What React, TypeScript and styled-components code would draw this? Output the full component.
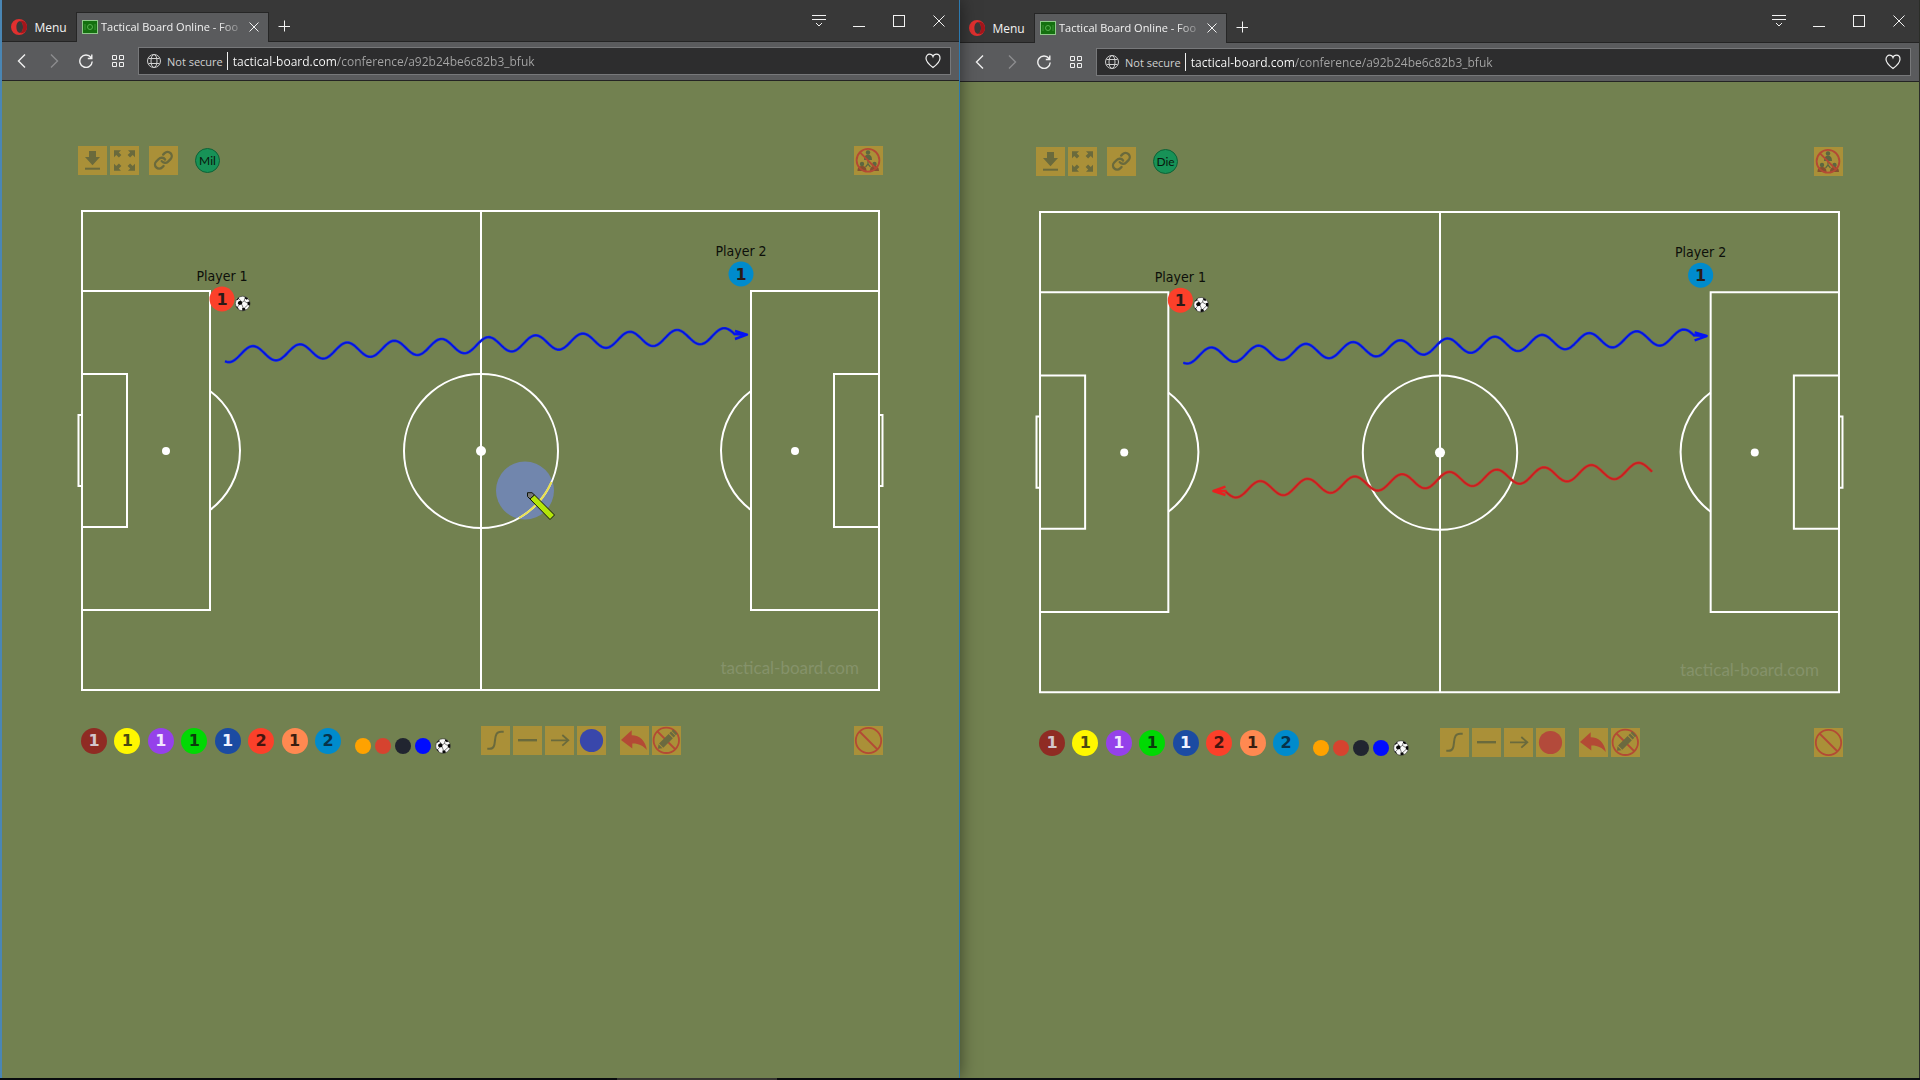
import React from "react";
import styled, { createGlobalStyle } from "styled-components";

const UI_FONT = `"Open Sans", "Noto Sans", sans-serif`;
const BOARD_FONT = `"DejaVu Sans Condensed", "DejaVu Sans", sans-serif`;
const NUMBER_FONT = `"DejaVu Sans", sans-serif`;
const ICON = "#6a6a3c";
const RED = "#b34a35";

const GlobalStyle = createGlobalStyle`
  *, *::before, *::after { box-sizing: border-box; }
  body { margin: 0; background: #0b0f12; font-family: ${UI_FONT}; }
  button, input { font: inherit; color: inherit; }
`;

const Desktop = styled.div`
  display: flex;
  flex-direction: column;
  min-height: 100vh;
`;

const Windows = styled.div`
  display: grid;
  grid-template-columns: 1fr 1fr;
  flex: 1;
`;

const Taskbar = styled.div`
  display: grid;
  grid-template-columns: 617fr 160fr 1143fr;
  height: 2px;
`;

const TaskbarThumb = styled.span`
  grid-column: 2;
  background: #45453f;
`;

const Window = styled.section<{ $active: boolean }>`
  position: relative;
  z-index: ${(p) => (p.$active ? 1 : 0)};
  display: flex;
  flex-direction: column;
  min-width: 0;
  background: #728150;
  border-left: ${(p) => (p.$active ? "2px solid #4a86b4" : "none")};
  border-right: 1px solid ${(p) => (p.$active ? "#2c7ab0" : "#2b2d28")};
  box-shadow: ${(p) => (p.$active ? "0 0 16px rgba(0, 0, 0, 0.5)" : "none")};
`;

const TabBar = styled.header<{ $active: boolean }>`
  display: flex;
  align-items: flex-end;
  height: ${(p) => (p.$active ? 42 : 43)}px;
  background: #383838;
  border-bottom: 1px solid #242424;
  color: #f2f2f2;
  font-size: 12px;
`;

const BareButton = styled.button`
  display: flex;
  align-items: center;
  justify-content: center;
  padding: 0;
  border: 0;
  background: none;
`;

const MenuButton = styled(BareButton)`
  gap: 7px;
  width: 74px;
  height: 28px;
`;

const Tab = styled.div`
  display: flex;
  align-items: center;
  gap: 3px;
  width: 193px;
  height: 30px;
  margin-bottom: -1px;
  padding: 0 4px 2px 5px;
  background: #5a5b5d;
  border: 1px solid #262626;
  border-bottom: 0;
`;

const TabTitle = styled.span`
  flex: 1;
  white-space: nowrap;
  font-size: 11px;
  mask-image: linear-gradient(90deg, #000 84%, rgba(0, 0, 0, 0.2) 100%);
`;

const CloseTab = styled(BareButton)`
  width: 20px;
  height: 20px;
`;

const NewTab = styled(BareButton)`
  width: 30px;
  height: 30px;
`;

const WindowControls = styled.div`
  display: flex;
  align-self: flex-start;
  margin-left: auto;
`;

const WindowControl = styled(BareButton)`
  width: 40px;
  height: 42px;
`;

const Toolbar = styled.nav`
  display: flex;
  align-items: center;
  height: 39px;
  padding: 0 8px 0 4px;
  background: #5a5b5d;
  border-bottom: 1px solid #242424;
  color: #f0f0f0;
`;

const NavButton = styled(BareButton)`
  width: 32px;
  height: 28px;
`;

const AddressBar = styled.form`
  display: flex;
  flex: 1;
  align-items: center;
  height: 28px;
  margin-left: 4px;
  padding: 0 9px 0 8px;
  background: #2d2d2e;
  border: 1px solid #77787a;
`;

const Security = styled(BareButton)`
  gap: 6px;
  height: 18px;
  padding-right: 4px;
  border-right: 1px solid #f0f0f0;
  color: #d0d0d0;
  font-size: 11px;
`;

const UrlInput = styled.input`
  flex: 1;
  min-width: 0;
  height: 24px;
  margin-left: 5px;
  padding: 0;
  border: 0;
  outline: 0;
  font-size: 12px;
  color: transparent;
  background: linear-gradient(90deg, #ffffff 104px, #a6a6a6 104px);
  background-clip: text;
`;

const Page = styled.main`
  display: flex;
  flex: 1;
  flex-direction: column;
  gap: 32px;
  padding: 65px 76px 32px;
`;

const Row = styled.div`
  display: flex;
  align-items: center;
`;

const Group = styled.div<{ $after?: number }>`
  display: flex;
  gap: 3px;
  margin-right: ${(p) => p.$after ?? 0}px;
`;

const Tool = styled.button`
  width: 29px;
  height: 29px;
  padding: 0;
  border: 0;
  background: #aa9038;
`;

const EndTool = styled(Tool)`
  margin-left: auto;
`;

const ToolSvg = styled.svg`
  display: block;
  width: 29px;
  height: 29px;
`;

const Avatar = styled.div`
  display: flex;
  align-items: center;
  justify-content: center;
  width: 25px;
  height: 25px;
  border: 1px solid #0d6236;
  border-radius: 50%;
  background: #179257;
  color: #08160c;
  font: 12px Lato, sans-serif;
`;

const Pitch = styled.svg`
  display: block;
  width: 100%;
  overflow: visible;
  font-family: ${BOARD_FONT};
`;

const BottomRow = styled.div`
  display: grid;
  grid-template-columns: 1fr 1fr;
`;

const Palette = styled.div`
  display: flex;
  align-items: center;
  padding-left: 3px;
`;

const Tokens = styled.div`
  display: flex;
  justify-content: space-between;
  width: 260px;
  margin-right: 14px;
`;

const Token = styled.button<{ $bg: string; $fg: string }>`
  width: 26px;
  height: 26px;
  padding: 0;
  border: 0;
  border-radius: 50%;
  background: ${(p) => p.$bg};
  color: ${(p) => p.$fg};
  font: bold 16px/26px ${NUMBER_FONT};
`;

const Balls = styled.div`
  display: flex;
  align-self: flex-end;
  gap: 4px;
  padding-bottom: 1px;
`;

const Dot = styled.button<{ $bg: string }>`
  width: 16px;
  height: 16px;
  padding: 0;
  border: 0;
  border-radius: 50%;
  background: ${(p) => p.$bg};
`;

const BallSvg = styled.svg`
  display: block;
  width: 16px;
  height: 16px;
`;

const TOKENS = [
  { n: 1, bg: "#8f2b23", fg: "#d3c6cc", name: "Maroon" },
  { n: 1, bg: "#fff700", fg: "#4b4a12", name: "Yellow" },
  { n: 1, bg: "#9541ea", fg: "#f1e6ff", name: "Purple" },
  { n: 1, bg: "#00d903", fg: "#0b3c0d", name: "Green" },
  { n: 1, bg: "#1b4ba2", fg: "#f0f2ff", name: "Navy" },
  { n: 2, bg: "#fb402a", fg: "#45150f", name: "Red" },
  { n: 1, bg: "#ff8951", fg: "#3b1d10", name: "Coral" },
  { n: 2, bg: "#008bcc", fg: "#07324a", name: "Cyan" },
];

const DOTS = [
  { bg: "#ffa200", name: "Orange ball" },
  { bg: "#d6432f", name: "Red ball" },
  { bg: "#212530", name: "Black ball" },
  { bg: "#000cff", name: "Blue ball" },
];

type WaveProps = { from: number; to: number; peakX: number; midY: number; slope: number; period: number };

/** Builds a sampled sine wave that runs along a sloping line. */
function wavePath({ from, to, peakX, midY, slope, period }: WaveProps) {
  const points: string[] = [];
  for (let x = from; x <= to; x += 1.5) {
    const d = x - peakX;
    const y = midY + slope * d - 7.6 * Math.cos((2 * Math.PI * d) / period);
    points.push(`${x.toFixed(1)} ${y.toFixed(2)}`);
  }
  return `M${points.join("L")}`;
}

const BLUE_WAVE = wavePath({ from: 147, to: 658, peakX: 174.7, midY: 146.7, slope: -0.038, period: 47.13 });
const RED_WAVE = wavePath({ from: 188.5, to: 615, peakX: 223.4, midY: 280, slope: -0.0484, period: 47.17 });

function BallArt() {
  return (
    <>
      <circle r="7.3" fill="#fafafa" stroke="#2a2a2a" strokeWidth=".6" />
      <path
        fill="#080808"
        d="M-4.500-1.800-2.200-3-.3-1.500-.8 1-3.600 1.500-5 0ZM2-6.800A7.300 7.300 0 0 1 5.500-4.700L4-3.800 2-5ZM4.500-1.500 7-2A7.300 7.300 0 0 1 7 2L5 1.500ZM-6.500-3.200A7.300 7.300 0 0 1-3.500-6.300L-3.800-4.800-5.200-3.500ZM-6.800 2.500-5.200 3.500-4 5.500-4.500 5.800A7.300 7.300 0 0 1-6.800 2.500ZM-.5 4.500 2 4.200 3 6.600A7.300 7.300 0 0 1-.5 7.300Z"
      />
      <path
        stroke="#444"
        strokeWidth=".7"
        fill="none"
        d="M-.3-1.500 1.500-2.500 2-5M1.500-2.500 4.500-.5M-.8 1 .5 4.500M5 1.500 2 4.200M-3.600 1.500-5.200 3.500M-2.200-3-3.800-4.800"
      />
    </>
  );
}

function PlayerMark({ x, y, label, color }: { x: number; y: number; label: string; color: string }) {
  return (
    <g textAnchor="middle">
      <circle cx={x} cy={y} r="12.5" fill={color} />
      <text x={x} y={y + 6} fontSize="16" fontWeight="bold" fontFamily={NUMBER_FONT} fill="#2a1a18">
        1
      </text>
      <text x={x} y={y - 18} fontSize="14" fill="#0d0f0a">
        {label}
      </text>
    </g>
  );
}

function PitchHalf() {
  return (
    <g>
      <path d="M4 84H132V403H4M4 167H49V320H4M4 208H.5V279H4" />
      <path d="M132 184A74 74 0 0 1 132 303" />
      <circle cx="88" cy="244" r="4" fill="#fff" stroke="none" />
    </g>
  );
}

function Board({ active }: { active: boolean }) {
  return (
    <Pitch viewBox="0 0 805 487" role="img" aria-label="Football pitch">
      {active && <circle cx="447" cy="283.5" r="29" fill="#7186ad" />}
      <g fill="none" stroke="#fff" strokeWidth="2">
        <path d="M4 4H801V483H4ZM403 4V483" />
        <circle cx="403" cy="244" r="77" />
        <circle cx="403" cy="244" r="5" fill="#fff" stroke="none" />
        <PitchHalf />
        <g transform="matrix(-1 0 0 1 805 0)">
          <PitchHalf />
        </g>
      </g>
      <text x="781" y="467" fontSize="17" textAnchor="end" fill="#85926a" fontFamily="Lato, sans-serif">
        tactical-board.com
      </text>
      <PlayerMark x={144} y={92} label="Player 1" color="#fb402a" />
      <g transform="translate(164.7 96.5)">
        <BallArt />
      </g>
      <PlayerMark x={663} y={67} label="Player 2" color="#008bcc" />
      <g fill="none" strokeLinejoin="round">
        <path d={BLUE_WAVE} stroke="#0c20ff" strokeWidth="2.6" />
        <path d={BLUE_WAVE} stroke="#0818c8" strokeWidth="1.2" />
        <path d="M657 124 669 127.7 657 132M669 127.7 656 127" stroke="#0412f6" strokeWidth="2.4" />
      </g>
      {!active && (
        <g fill="none" strokeLinejoin="round">
          <path d={RED_WAVE} stroke="#dc2828" strokeWidth="2.6" />
          <path d={RED_WAVE} stroke="#bf2421" strokeWidth="1.4" />
          <path d="M189 278 177 282.3 189 286.3M177 282.3 190 282.3" stroke="#e8201f" strokeWidth="2.4" />
        </g>
      )}
      {active && (
        <>
          <path d="M473.5 275A77 77 0 0 1 441 311" fill="none" stroke="#e9e150" strokeWidth="2" />
          <g stroke="#10160a">
            <path d="M449.5 285.7H454L456.5 288 452 292 449.5 289.5Z" fill="#777" />
            <path d="M452 292 456.5 288 476.5 308 472 312.5Z" fill="#b4e60a" />
          </g>
        </>
      )}
    </Pitch>
  );
}

function Icon({ children }: { children: React.ReactNode }) {
  return (
    <ToolSvg viewBox="0 0 29 29" fill="none" stroke={ICON} strokeWidth="2" aria-hidden="true">
      {children}
    </ToolSvg>
  );
}

const EXPAND_ARROW = "M4 4.3H11L8.8 6.5 11.4 9.1 8.9 11.4 6.3 8.9 4 11.2Z";

function TopTools({ user }: { user: string }) {
  return (
    <Row>
      <Group $after={10}>
        <Tool type="button" aria-label="Download">
          <Icon>
            <path d="M11 5h7v6h4l-7.5 8.3L7 11h4z" fill={ICON} stroke="none" />
            <path d="M7 22.7h15" />
          </Icon>
        </Tool>
        <Tool type="button" aria-label="Full screen">
          <Icon>
            <g fill={ICON} stroke="none">
              <path d={EXPAND_ARROW} />
              <path d={EXPAND_ARROW} transform="matrix(-1 0 0 1 29 0)" />
              <path d={EXPAND_ARROW} transform="matrix(1 0 0 -1 0 29)" />
              <path d={EXPAND_ARROW} transform="matrix(-1 0 0 -1 29 29)" />
            </g>
          </Icon>
        </Tool>
      </Group>
      <Group $after={17}>
        <Tool type="button" aria-label="Share link">
          <Icon>
            <g transform="translate(4.3 4.2) scale(.84)" strokeWidth="2.8" strokeLinecap="round">
              <path d="M10 13a5 5 0 0 0 7.54.54l3-3a5 5 0 0 0-7.07-7.07l-1.72 1.71" />
              <path d="M14 11a5 5 0 0 0-7.54-.54l-3 3a5 5 0 0 0 7.07 7.07l1.71-1.71" />
            </g>
          </Icon>
        </Tool>
      </Group>
      <Avatar>{user}</Avatar>
      <EndTool type="button" aria-label="Leave conference">
        <Icon>
          <g fill="#5d6640" stroke="none">
            <circle cx="14" cy="6.5" r="2.2" />
            <path d="M10 14c0-4 1.8-5.3 4-5.3s4 1.3 4 5.3z" />
            <circle cx="8" cy="18" r="2.2" />
            <circle cx="20.5" cy="18" r="2.2" />
          </g>
          <path d="M3.5 25c0-4 2-5 4.5-5s4.5 1 4.5 5zM16 25c0-4 2-5 4.5-5s4.5 1 4.5 5z" fill="#84502f" stroke="none" />
          <path d="M14 15v3l-2.5 3M14 18l2.5 3" stroke="#5d6640" strokeWidth="1.2" />
          <circle cx="14" cy="14.3" r="11.4" stroke={RED} strokeWidth="1.8" />
          <path d="M6 6.3 22 22.5" stroke={RED} strokeWidth="1.8" />
        </Icon>
      </EndTool>
    </Row>
  );
}

function BottomTools({ color }: { color: string }) {
  return (
    <BottomRow>
      <Palette>
        <Tokens>
          {TOKENS.map((t) => (
            <Token key={t.name} type="button" $bg={t.bg} $fg={t.fg} aria-label={`${t.name} player ${t.n}`}>
              {t.n}
            </Token>
          ))}
        </Tokens>
        <Balls>
          {DOTS.map((d) => (
            <Dot key={d.name} type="button" $bg={d.bg} aria-label={d.name} />
          ))}
          <Dot type="button" $bg="transparent" aria-label="Football">
            <BallSvg viewBox="-8 -8 16 16" aria-hidden="true">
              <BallArt />
            </BallSvg>
          </Dot>
        </Balls>
      </Palette>
      <Row>
        <Group $after={14}>
          <Tool type="button" aria-label="Line shape">
            <Icon>
              <path d="M6.3 22.8H8.5C13 22.8 13.5 19.5 14 14.3S15.5 5.8 20 5.8H22.7" />
            </Icon>
          </Tool>
          <Tool type="button" aria-label="Line style">
            <Icon>
              <path d="M5 14.2H24" strokeWidth="2.4" />
            </Icon>
          </Tool>
          <Tool type="button" aria-label="Arrow end">
            <Icon>
              <path d="M6 14.3H23M17.3 9 23.3 14.3 17.3 19.6" strokeWidth="1.8" />
            </Icon>
          </Tool>
          <Tool type="button" aria-label="Line colour">
            <Icon>
              <circle cx="14.5" cy="14.5" r="11.6" fill={color} stroke="none" />
            </Icon>
          </Tool>
        </Group>
        <Group>
          <Tool type="button" aria-label="Undo">
            <Icon>
              <path
                d="M1 14 11.7 4.3V9.3C20 9.5 25.5 15 26.9 24 23 19.5 18.5 17.3 12.3 17.5V22.5Z"
                fill={RED}
                stroke="none"
              />
            </Icon>
          </Tool>
          <Tool type="button" aria-label="Erase drawings">
            <Icon>
              <circle cx="14.3" cy="14.3" r="12.7" stroke={RED} strokeWidth="1.8" />
              <path d="M5.5 5.5 23 23" stroke={RED} strokeWidth="1.8" />
              <g fill="#6b6a3f" stroke="none" transform="rotate(-45 14.5 14.3)">
                <path d="M2.500 14.300 6 11.500V17.100ZM7 11.300H20.500V17.300H7ZM21.500 11.300H24V17.300H21.500ZM24.800 11.300H27V17.300H24.800Z" />
              </g>
            </Icon>
          </Tool>
        </Group>
        <EndTool type="button" aria-label="Clear board">
          <Icon>
            <circle cx="14.5" cy="14.5" r="12.7" stroke={RED} strokeWidth="1.8" />
            <path d="M5.5 5.5 23.5 23.5" stroke={RED} strokeWidth="1.8" />
          </Icon>
        </EndTool>
      </Row>
    </BottomRow>
  );
}

function Glyph({ size, children, stroke = 1 }: { size: number; children: React.ReactNode; stroke?: number }) {
  return (
    <svg
      width={size}
      height={size}
      viewBox={`0 0 ${size} ${size}`}
      fill="none"
      stroke="currentColor"
      strokeWidth={stroke}
      aria-hidden="true"
    >
      {children}
    </svg>
  );
}

function BrowserWindow({ active, user, color }: { active: boolean; user: string; color: string }) {
  return (
    <Window $active={active}>
      <TabBar $active={active}>
        <MenuButton type="button">
          <Glyph size={16}>
            <path
              fillRule="evenodd"
              stroke="none"
              fill="#e0302f"
              d="M8 0a8 8 0 1 0 0 16A8 8 0 0 0 8 0Zm.8 2.2c2 0 3.2 2.5 3.2 5.800s-1.200 5.800-3.200 5.800S5.400 11.300 5.400 8 6.800 2.200 8.800 2.200Z"
            />
            <path
              stroke="none"
              fill="#a3151b"
              d="M8.800 2.200c3-1.500 7.200 1.300 7.200 5.800s-4.200 7.300-7.200 5.800c2 0 3.200-2.500 3.200-5.800S10.800 2.200 8.800 2.200Z"
            />
          </Glyph>
          Menu
        </MenuButton>
        <Tab>
          <Glyph size={16}>
            <rect x=".5" y="1.5" width="15" height="13" fill="#14700f" stroke="#8fc98a" />
            <circle cx="8" cy="8" r="2.5" stroke="#58b050" />
            <path d="M3 5v6M13 5v6" stroke="#3c9436" />
          </Glyph>
          <TabTitle>Tactical Board Online - Foo</TabTitle>
          <CloseTab type="button" aria-label="Close tab">
            <Glyph size={10}>
              <path d="M.5.5 9.5 9.5M9.5.5.5 9.5" />
            </Glyph>
          </CloseTab>
        </Tab>
        <NewTab type="button" aria-label="New tab">
          <Glyph size={12}>
            <path d="M6.5.5V11.5M.5 6.5H12" />
          </Glyph>
        </NewTab>
        <WindowControls>
          <WindowControl type="button" aria-label="Tab menu">
            <Glyph size={14}>
              <path d="M0 1.5H14M0 5.5H14M4 9 7 12 10 9" />
            </Glyph>
          </WindowControl>
          <WindowControl type="button" aria-label="Minimise">
            <Glyph size={12}>
              <path d="M0 11.5H12" />
            </Glyph>
          </WindowControl>
          <WindowControl type="button" aria-label="Maximise">
            <Glyph size={12}>
              <rect x=".5" y=".5" width="11" height="11" />
            </Glyph>
          </WindowControl>
          <WindowControl type="button" aria-label="Close window">
            <Glyph size={12}>
              <path d="M.5.5 11.5 11.5M11.5.5.5 11.5" />
            </Glyph>
          </WindowControl>
        </WindowControls>
      </TabBar>
      <Toolbar>
        <NavButton type="button" aria-label="Back">
          <Glyph size={14} stroke={1.4}>
            <path d="M10 .5 3.5 7 10 13.5" />
          </Glyph>
        </NavButton>
        <NavButton type="button" aria-label="Forward" disabled>
          <Glyph size={14} stroke={1.4}>
            <path d="M4 .5 10.5 7 4 13.5" stroke="#8c8d8f" />
          </Glyph>
        </NavButton>
        <NavButton type="button" aria-label="Reload">
          <Glyph size={14} stroke={1.4}>
            <path d="M12 3.5A6.2 6.2 0 1 0 13.2 7.5M12.8.5V4.5H8.8" />
          </Glyph>
        </NavButton>
        <NavButton type="button" aria-label="Speed dial">
          <Glyph size={14}>
            <path d="M1.5 1.5h4v4h-4zM8.5 1.5h4v4h-4zM1.5 8.5h4v4h-4zM8.5 8.5h4v4h-4z" />
          </Glyph>
        </NavButton>
        <AddressBar>
          <Security type="button">
            <Glyph size={14}>
              <circle cx="7" cy="7" r="6.5" />
              <ellipse cx="7" cy="7" rx="3" ry="6.5" />
              <path d="M1.5 4.5H12.5M1.5 9.5H12.5" />
            </Glyph>
            Not secure
          </Security>
          <UrlInput
            type="text"
            aria-label="Address"
            defaultValue="tactical-board.com/conference/a92b24be6c82b3_bfuk"
          />
          <BareButton type="button" aria-label="Add bookmark">
            <Glyph size={16} stroke={1.2}>
              <path d="M8 14.5C4 11.5 1 8.5 1 5.2 1 2.8 2.7 1.2 4.6 1.2 6.3 1.2 7.5 2.2 8 3.6 8.5 2.2 9.7 1.2 11.4 1.2 13.3 1.2 15 2.8 15 5.2 15 8.5 12 11.5 8 14.5Z" />
            </Glyph>
          </BareButton>
        </AddressBar>
      </Toolbar>
      <Page>
        <TopTools user={user} />
        <Board active={active} />
        <BottomTools color={color} />
      </Page>
    </Window>
  );
}

export default function App() {
  return (
    <Desktop>
      <GlobalStyle />
      <Windows>
        <BrowserWindow active user="Mil" color="#3947ab" />
        <BrowserWindow active={false} user="Die" color="#b34a3b" />
      </Windows>
      <Taskbar>
        <TaskbarThumb />
      </Taskbar>
    </Desktop>
  );
}
